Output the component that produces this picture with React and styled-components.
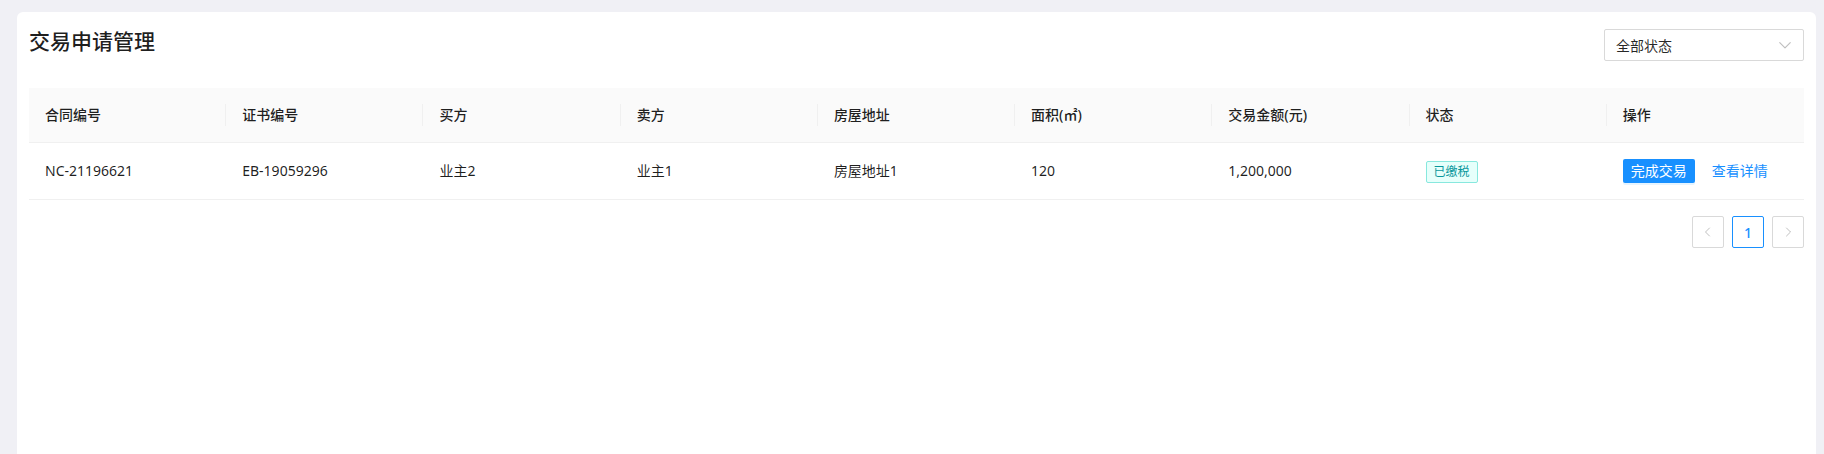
import styled, { createGlobalStyle } from "styled-components";

const GlobalStyle = createGlobalStyle`
  body {
    margin: 0;
    background: #f0f0f5;
    font-family: "Noto Sans", "Noto Sans CJK SC", sans-serif;
    font-size: 14px;
    color: rgba(0, 0, 0, 0.85);
  }
`;

const Page = styled.div`
  padding: 12px 8px 0 17px;
  height: 454px;
  overflow: hidden;
  box-sizing: border-box;
`;

const Card = styled.div`
  background: #fff;
  border-radius: 6px;
  padding: 17px 12px;
  min-height: 480px;
  box-sizing: border-box;
`;

const Header = styled.div`
  display: flex;
  justify-content: space-between;
  align-items: flex-start;
  margin-bottom: 27px;
`;

const Title = styled.h2`
  margin: 0;
  font-size: 21px;
  line-height: 24px;
  font-weight: 500;
  color: rgba(0, 0, 0, 0.88);
`;

const Select = styled.div`
  width: 200px;
  height: 32px;
  box-sizing: border-box;
  border: 1px solid #d9d9d9;
  border-radius: 2px;
  padding: 0 11px;
  display: flex;
  align-items: center;
  justify-content: space-between;
  color: rgba(0, 0, 0, 0.85);
`;

const Table = styled.table`
  width: 100%;
  table-layout: fixed;
  border-collapse: collapse;
`;

const Th = styled.th`
  position: relative;
  background: #fafafa;
  text-align: left;
  font-weight: 500;
  color: rgba(0, 0, 0, 0.88);
  padding: 16px;
  line-height: 22px;
  border-bottom: 1px solid #f0f0f0;

  &:not(:last-child)::before {
    content: "";
    position: absolute;
    right: 0;
    top: 50%;
    width: 1px;
    height: 22px;
    transform: translateY(-50%);
    background: #f0f0f0;
  }
`;

const Td = styled.td`
  padding: 16px;
  line-height: 22px;
  border-bottom: 1px solid #f0f0f0;
  color: rgba(0, 0, 0, 0.88);
  white-space: nowrap;
`;

const Tag = styled.span`
  display: inline-block;
  height: 22px;
  line-height: 20px;
  box-sizing: border-box;
  padding: 0 7px;
  font-size: 12px;
  border-radius: 2px;
  border: 1px solid ${(p) => p.$border};
  background: ${(p) => p.$bg};
  color: ${(p) => p.$color};
`;

const Actions = styled.div`
  display: flex;
  align-items: center;
  gap: 10px;
`;

const PrimaryButton = styled.button`
  height: 24px;
  padding: 0 8px;
  border: none;
  border-radius: 2px;
  background: #1890ff;
  color: #fff;
  font: inherit;
  font-size: 14px;
  line-height: 24px;
  box-shadow: 0 2px 0 rgba(5, 145, 255, 0.1);
`;

const LinkButton = styled.button`
  height: 24px;
  padding: 0 7px;
  border: none;
  background: none;
  color: #1890ff;
  font: inherit;
  font-size: 14px;
`;

const Pager = styled.div`
  display: flex;
  justify-content: flex-end;
  gap: 8px;
  margin-top: 16px;
`;

const PageItem = styled.div`
  width: 32px;
  height: 32px;
  box-sizing: border-box;
  display: flex;
  align-items: center;
  justify-content: center;
  border: 1px solid ${(p) => (p.$active ? "#1890ff" : "#d9d9d9")};
  border-radius: 2px;
  color: ${(p) => (p.$active ? "#1890ff" : "rgba(0,0,0,0.25)")};
  font-weight: ${(p) => (p.$active ? 500 : 400)};
`;

const Chevron = ({ dir, size = 12, color = "rgba(0,0,0,0.25)" }) => {
  const d = {
    down: "M1.5 4 L6 8.5 L10.5 4",
    left: "M7.5 2 L3.5 6 L7.5 10",
    right: "M4.5 2 L8.5 6 L4.5 10",
  }[dir];
  return (
    <svg width={size} height={size} viewBox="0 0 12 12" fill="none">
      <path d={d} stroke={color} strokeWidth="1" strokeLinecap="round" strokeLinejoin="round" />
    </svg>
  );
};

const columns = ["合同编号", "证书编号", "买方", "卖方", "房屋地址", "面积(㎡)", "交易金额(元)", "状态", "操作"];

const rows = [
  {
    contract: "NC-21196621",
    cert: "EB-19059296",
    buyer: "业主2",
    seller: "业主1",
    address: "房屋地址1",
    area: "120",
    amount: "1,200,000",
    status: "已缴税",
  },
];

export default function App() {
  return (
    <>
      <GlobalStyle />
      <Page>
        <Card>
          <Header>
            <Title>交易申请管理</Title>
            <Select>
              <span>全部状态</span>
              <Chevron dir="down" size={14} />
            </Select>
          </Header>
          <Table>
            <thead>
              <tr>
                {columns.map((c) => (
                  <Th key={c}>{c}</Th>
                ))}
              </tr>
            </thead>
            <tbody>
              {rows.map((r) => (
                <tr key={r.contract}>
                  <Td>{r.contract}</Td>
                  <Td>{r.cert}</Td>
                  <Td>{r.buyer}</Td>
                  <Td>{r.seller}</Td>
                  <Td>{r.address}</Td>
                  <Td>{r.area}</Td>
                  <Td>{r.amount}</Td>
                  <Td>
                    <Tag $border="#87e8de" $bg="#e6fffb" $color="#08979c">
                      {r.status}
                    </Tag>
                  </Td>
                  <Td>
                    <Actions>
                      <PrimaryButton>完成交易</PrimaryButton>
                      <LinkButton>查看详情</LinkButton>
                    </Actions>
                  </Td>
                </tr>
              ))}
            </tbody>
          </Table>
          <Pager>
            <PageItem>
              <Chevron dir="left" />
            </PageItem>
            <PageItem $active>1</PageItem>
            <PageItem>
              <Chevron dir="right" />
            </PageItem>
          </Pager>
        </Card>
      </Page>
    </>
  );
}
